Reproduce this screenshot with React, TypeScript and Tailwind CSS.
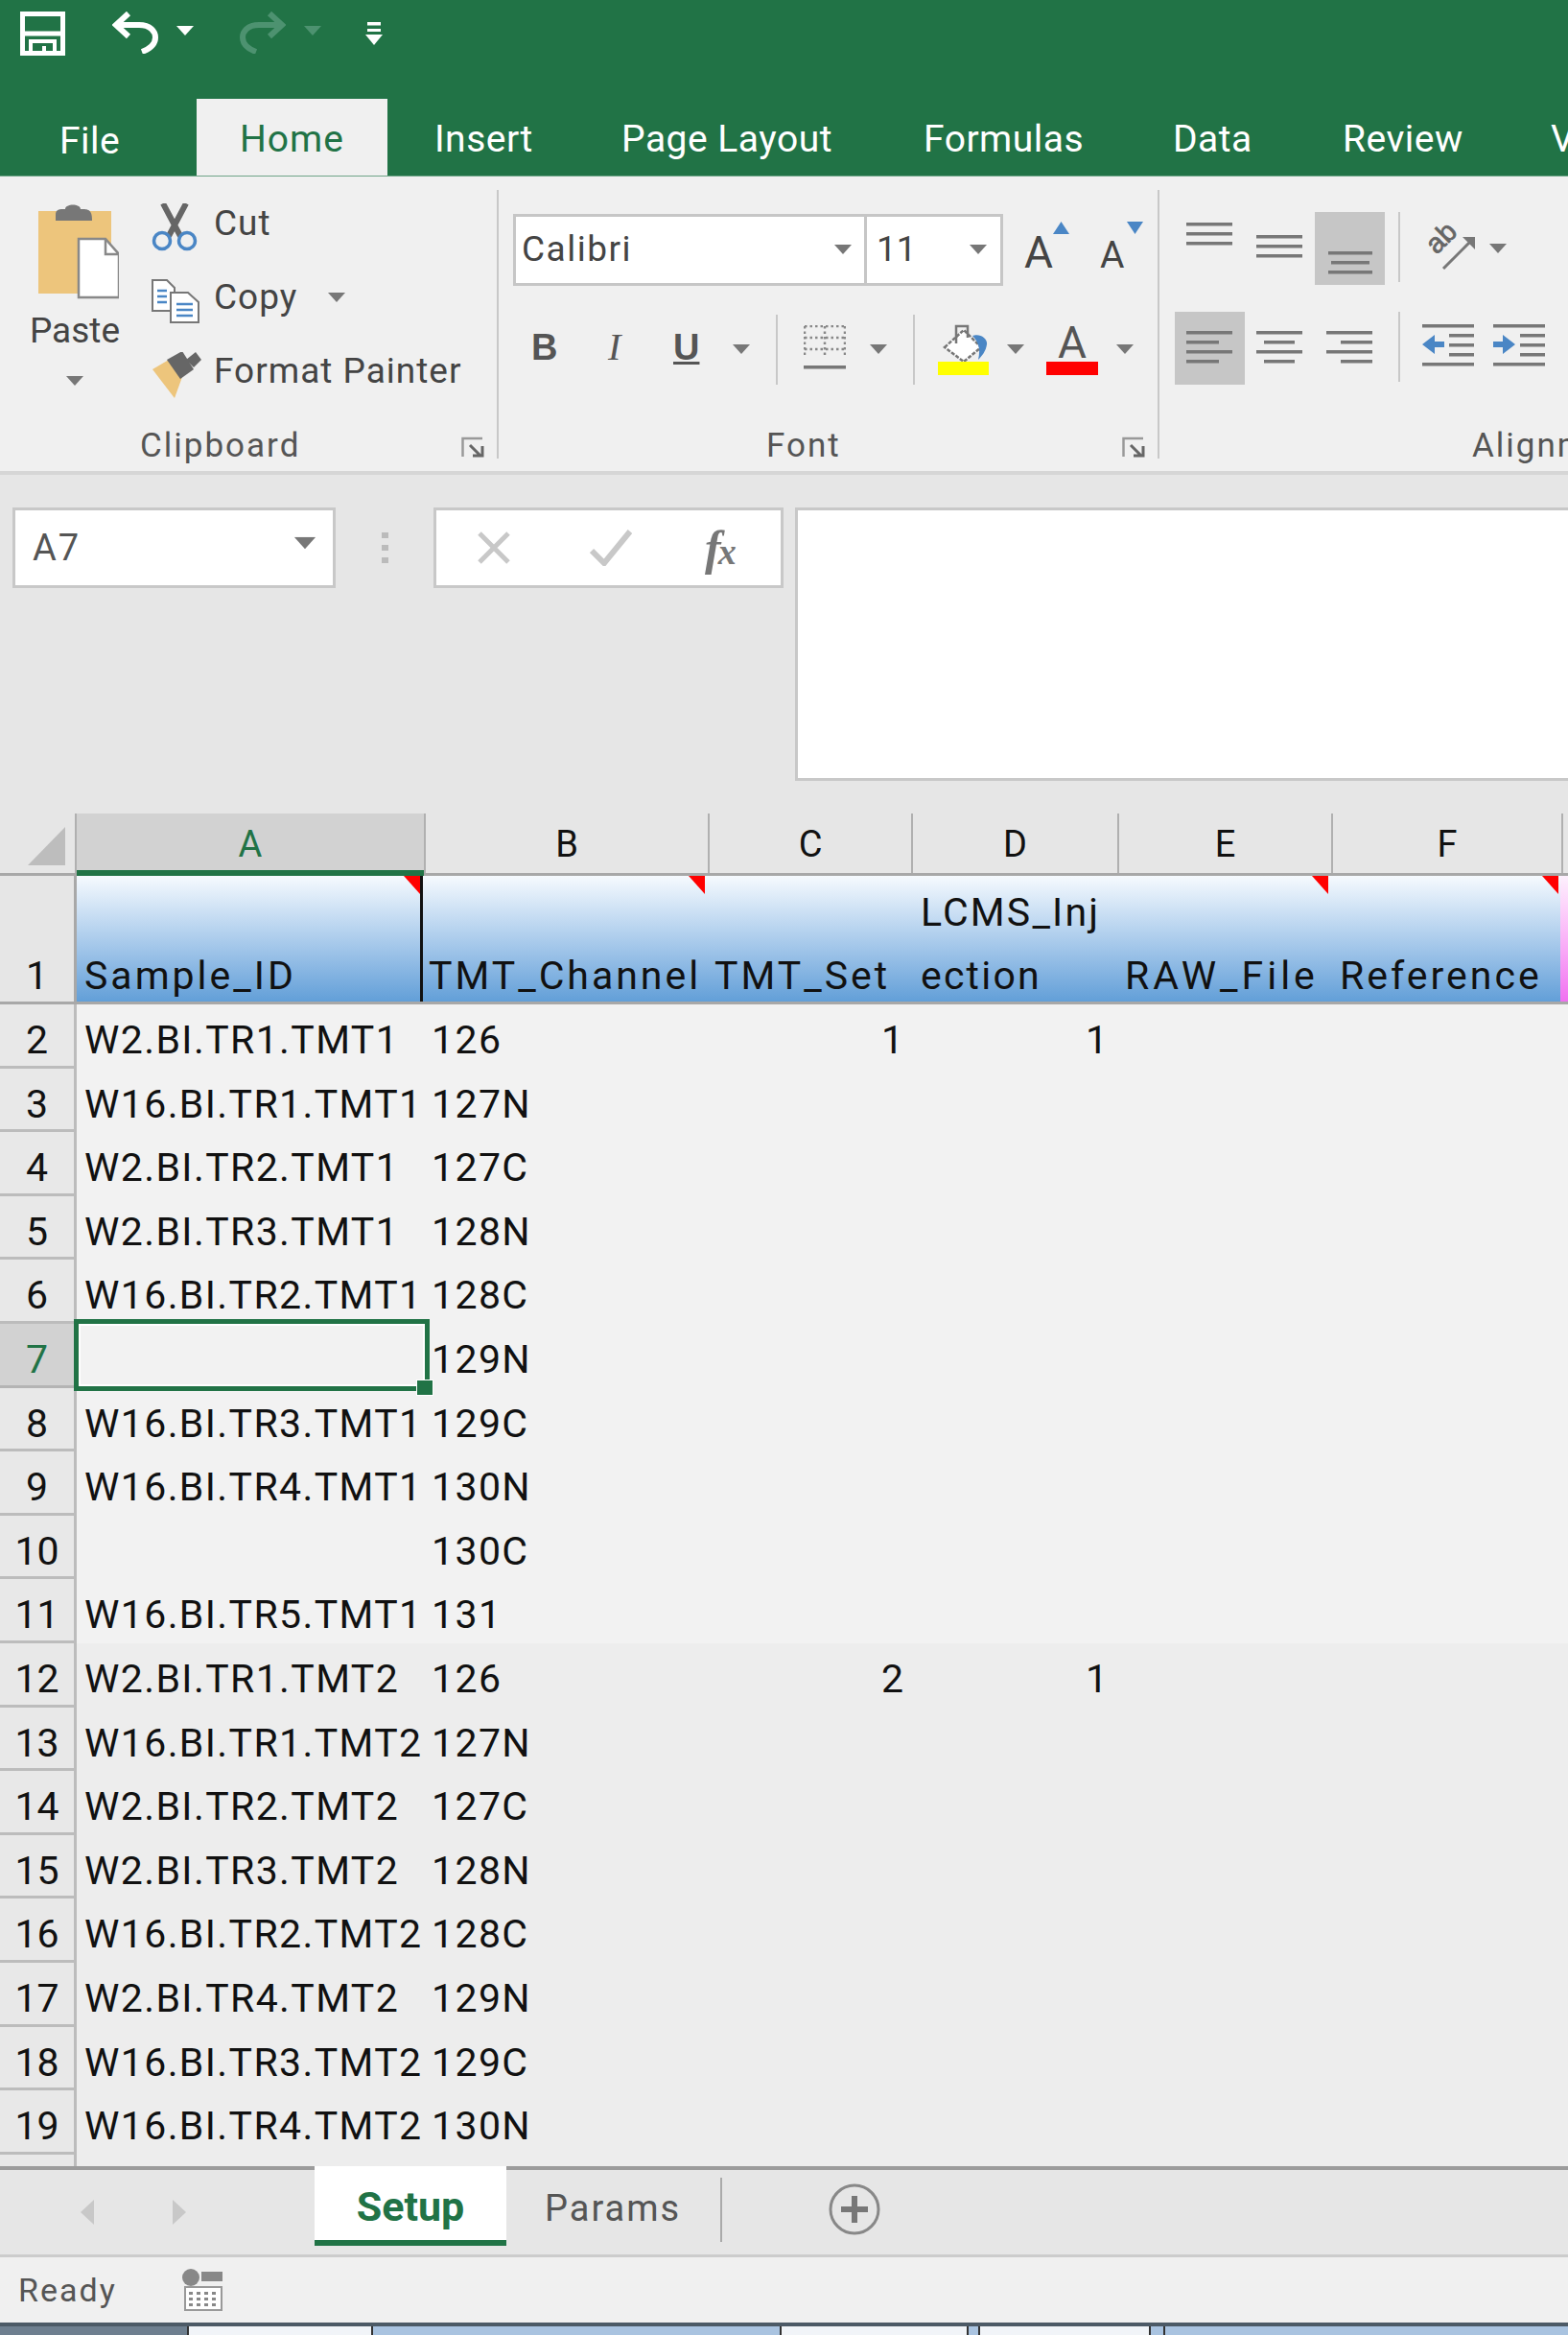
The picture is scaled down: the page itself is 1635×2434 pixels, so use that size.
import React from "react";

const ROWS: { a: string; b: string; c?: string; d?: string }[] = [
  { a: "W2.BI.TR1.TMT1", b: "126", c: "1", d: "1" },
  { a: "W16.BI.TR1.TMT1", b: "127N" },
  { a: "W2.BI.TR2.TMT1", b: "127C" },
  { a: "W2.BI.TR3.TMT1", b: "128N" },
  { a: "W16.BI.TR2.TMT1", b: "128C" },
  { a: "", b: "129N" },
  { a: "W16.BI.TR3.TMT1", b: "129C" },
  { a: "W16.BI.TR4.TMT1", b: "130N" },
  { a: "", b: "130C" },
  { a: "W16.BI.TR5.TMT1", b: "131" },
  { a: "W2.BI.TR1.TMT2", b: "126", c: "2", d: "1" },
  { a: "W16.BI.TR1.TMT2", b: "127N" },
  { a: "W2.BI.TR2.TMT2", b: "127C" },
  { a: "W2.BI.TR3.TMT2", b: "128N" },
  { a: "W16.BI.TR2.TMT2", b: "128C" },
  { a: "W2.BI.TR4.TMT2", b: "129N" },
  { a: "W16.BI.TR3.TMT2", b: "129C" },
  { a: "W16.BI.TR4.TMT2", b: "130N" },
];

function Caret({ className = "" }: { className?: string }) {
  return (
    <svg width="18" height="10" viewBox="0 0 18 10" className={"shrink-0 " + className}>
      <path d="M0 0H18L9 10Z" fill="#777" />
    </svg>
  );
}

function Launcher() {
  return (
    <svg width="25" height="23" viewBox="0 0 25 23">
      <path d="M1.5 21V2H22" fill="none" stroke="#999" strokeWidth="2.5" />
      <path d="M9 9L20 20M12 20H22V10" fill="none" stroke="#666" strokeWidth="3" />
    </svg>
  );
}

function Lines({ lines }: { lines: [number, number, number][] }) {
  return (
    <svg width="73" height="76" viewBox="0 0 73 76">
      {lines.map(([x1, x2, y], i) => (
        <rect key={i} x={x1} y={y} width={x2 - x1} height="3.5" fill="#777" />
      ))}
    </svg>
  );
}

function AlignBtn({ lines, active }: { lines: [number, number, number][]; active?: boolean }) {
  return (
    <div className={active ? "w-[73px] h-[76px] bg-[#c6c6c6]" : "w-[73px] h-[76px]"}>
      <Lines lines={lines} />
    </div>
  );
}

function Indent({ right }: { right?: boolean }) {
  return (
    <svg width="54" height="46" viewBox="0 0 54 46">
      <rect x="0" y="1" width="54" height="3.5" fill="#777" />
      <rect x="0" y="41" width="54" height="3.5" fill="#777" />
      <rect x="28" y="11" width="26" height="3.5" fill="#777" />
      <rect x="28" y="21" width="26" height="3.5" fill="#777" />
      <rect x="28" y="31" width="26" height="3.5" fill="#777" />
      {right ? (
        <path d="M0 19H10V12L23 22L10 32V25H0Z" fill="#4a86c5" />
      ) : (
        <path d="M23 19H13V12L0 22L13 32V25H23Z" fill="#4a86c5" />
      )}
    </svg>
  );
}

function Divider({ className }: { className: string }) {
  return <div className={"w-[2px] shrink-0 bg-[#c8c8c8] " + className} />;
}

function Title() {
  return (
    <div className="h-[184px] bg-[#217346] flex flex-col justify-between border-b-[1px] border-[#6fa488]">
      <div className="flex items-start pt-[12px] pl-[21px]">
        <svg width="47" height="46" viewBox="0 0 47 46">
          <path d="M2.5 2.5H44.5V43.5H2.5Z" fill="none" stroke="#fff" strokeWidth="5" />
          <path d="M2 23H45" stroke="#fff" strokeWidth="5" />
          <path d="M11 44V31H36V44M25 36V44" fill="none" stroke="#fff" strokeWidth="4" />
        </svg>
        <svg width="48" height="44" viewBox="0 0 48 44" className="ml-[49px]">
          <path d="M17 2L4 14L17 26M4 14H28C40 14 45 21 45 27C45 35 39 39 31 42" fill="none" stroke="#fff" strokeWidth="6" />
        </svg>
        <Caret className="ml-[19px] mt-[15px] [&>path]:fill-white" />
        <svg width="48" height="44" viewBox="0 0 48 44" className="ml-[48px]">
          <path d="M31 2L44 14L31 26M44 14H20C8 14 3 21 3 27C3 35 9 39 17 42" fill="none" stroke="#4d9270" strokeWidth="6" />
        </svg>
        <Caret className="ml-[19px] mt-[15px] [&>path]:fill-[#4d9270]" />
        <svg width="20" height="24" viewBox="0 0 20 24" className="ml-[45px] mt-[11px]">
          <rect x="3" y="0" width="14" height="3.5" fill="#fff" />
          <rect x="3" y="7" width="14" height="3" fill="#fff" />
          <path d="M1 13H19L10 24Z" fill="#fff" />
        </svg>
      </div>
      <div className="flex h-[80px] text-[39px] text-white font-['Roboto',sans-serif] whitespace-nowrap overflow-hidden tracking-[0.5px]">
        <div className="w-[205px] shrink-0 pl-[62px] pt-[15px]">File</div>
        <div className="w-[199px] shrink-0 bg-[#f0f0f0] text-[#217346] text-center pt-[13px] tracking-[1px]">Home</div>
        <div className="w-[244px] shrink-0 pl-[49px] pt-[13px]">Insert</div>
        <div className="w-[315px] shrink-0 pt-[13px]">Page Layout</div>
        <div className="w-[260px] shrink-0 pt-[13px]">Formulas</div>
        <div className="w-[177px] shrink-0 pt-[13px]">Data</div>
        <div className="w-[217px] shrink-0 pt-[13px]">Review</div>
        <div className="shrink-0 pt-[13px]">View</div>
      </div>
    </div>
  );
}

function Clipboard() {
  return (
    <div className="w-[520px] shrink-0 relative text-[#444]">
      <div className="flex pl-[30px] pt-[26px]">
        <div className="w-[96px] flex flex-col items-center text-[37px] leading-[44px]">
          <svg width="92" height="102" viewBox="0 0 92 102">
            <path d="M8 10H84V96H8Z" fill="#edc57c" />
            <path d="M26 14C26 8 30 8 36 8C36 2 52 2 52 8C60 8 64 8 64 20H26Z" fill="#777" />
            <path d="M50 39H78L92 55V100H50Z" fill="#fff" stroke="#888" strokeWidth="2.5" />
            <path d="M78 39V55H92" fill="none" stroke="#888" strokeWidth="2.5" />
          </svg>
          <div className="mt-[11px]">Paste</div>
          <Caret className="mt-[25px]" />
        </div>
        <div className="ml-[32px] -mt-[16px] flex flex-col text-[37px] tracking-[1px]">
          <div className="h-[77px] flex items-center">
            <svg width="48" height="50" viewBox="0 0 48 50" className="w-[65px] pr-[17px] mt-[8px]">
              <path d="M12 0L30 34M36 0L18 34" stroke="#666" strokeWidth="6" />
              <circle cx="11" cy="39" r="8.5" fill="none" stroke="#4a86c5" strokeWidth="3.5" />
              <circle cx="37" cy="39" r="8.5" fill="none" stroke="#4a86c5" strokeWidth="3.5" />
            </svg>
            <span>Cut</span>
          </div>
          <div className="h-[77px] flex items-center">
            <svg width="50" height="46" viewBox="0 0 50 46" className="w-[65px] pr-[15px] mt-[8px]">
              <path d="M1 1H16L24 9V33H1Z" fill="#fff" stroke="#777" strokeWidth="2" />
              <path d="M6 12H16M6 18H16M6 24H16" stroke="#4a86c5" strokeWidth="2.5" />
              <path d="M20 14H38L49 24V45H20Z" fill="#fff" stroke="#777" strokeWidth="2" />
              <path d="M26 26H43M26 32H43M26 38H43" stroke="#4a86c5" strokeWidth="2.5" />
            </svg>
            <span>Copy</span>
            <Caret className="ml-[32px]" />
          </div>
          <div className="h-[77px] flex items-center">
            <svg width="52" height="48" viewBox="0 0 52 48" className="w-[65px] pr-[13px] mt-[8px]">
              <path d="M1 18L18 8L32 26L24 48Z" fill="#edc57c" />
              <path d="M16 8L32 -1L44 18L30 28Z" fill="#666" />
              <path d="M36 8L46 0L52 8L44 16Z" fill="#666" />
            </svg>
            <span>Format Painter</span>
          </div>
        </div>
      </div>
      <div className="absolute left-[146px] top-[260px] text-[35px] leading-[42px] text-[#555] tracking-[2px]">Clipboard</div>
      <div className="absolute right-[14px] top-[271px]">
        <Launcher />
      </div>
      <Divider className="absolute right-0 top-[14px] h-[280px]" />
    </div>
  );
}

function Font() {
  return (
    <div className="w-[689px] shrink-0 relative text-[#444]">
      <div className="pl-[15px] pt-[38px] flex flex-col gap-[28px]">
        <div className="flex items-center h-[76px]">
          <div className="w-[369px] h-[75px] shrink-0 bg-white border-[3px] border-[#c6c6c6] flex items-center justify-between pl-[6px] pr-[13px] text-[37px] tracking-[1.5px]">
            <span>Calibri</span>
            <Caret />
          </div>
          <div className="w-[145px] h-[75px] shrink-0 -ml-[3px] bg-white border-[3px] border-[#c6c6c6] flex items-center justify-between pl-[10px] pr-[14px] text-[37px]">
            <span>11</span>
            <Caret />
          </div>
          <div className="w-[79px] shrink-0 ml-[22px] flex items-start -mt-[4px]">
            <span className="text-[46px] leading-[46px] mt-[10px]">A</span>
            <svg width="17" height="13" viewBox="0 0 17 13" className="mt-[1px]">
              <path d="M0 13L8.5 0L17 13Z" fill="#4a86c5" />
            </svg>
          </div>
          <div className="flex items-start -mt-[4px]">
            <span className="text-[39px] leading-[40px] mt-[16px]">A</span>
            <svg width="17" height="13" viewBox="0 0 17 13" className="mt-[1px] ml-[3px]">
              <path d="M0 0L8.5 13L17 0Z" fill="#4a86c5" />
            </svg>
          </div>
        </div>
        <div className="flex items-center h-[76px]">
          <span className="w-[73px] shrink-0 pl-[19px] -mt-[4px] font-['Liberation_Sans',sans-serif] font-bold text-[38px] text-[#555]">B</span>
          <span className="w-[90px] shrink-0 pl-[26px] -mt-[4px] font-['Liberation_Serif',serif] italic text-[40px] text-[#555]">I</span>
          <span className="w-[50px] shrink-0 pl-[4px] -mt-[4px] font-['Liberation_Sans',sans-serif] font-bold underline text-[38px] text-[#555]">U</span>
          <Caret className="ml-[16px]" />
          <Divider className="h-[73px] ml-[27px]" />
          <svg width="44" height="46" viewBox="0 0 44 46" className="ml-[27px] shrink-0 -mt-[4px]">
            <path d="M1 1H44M1 13H44M1 25H44M1 1V34M22 1V34M43 1V34" fill="none" stroke="#888" strokeWidth="2.5" strokeDasharray="2.5 3" />
            <rect x="0" y="42" width="44" height="3.5" fill="#777" />
          </svg>
          <Caret className="ml-[25px]" />
          <Divider className="h-[73px] ml-[27px]" />
          <div className="ml-[24px] w-[53px] shrink-0 flex flex-col">
            <svg width="53" height="39" viewBox="0 0 53 39">
              <path d="M7 24L27 6L45 24L27 39Z" fill="#fff" stroke="#777" strokeWidth="2.5" strokeDasharray="4 1.5" />
              <path d="M19 20V2H31V14" fill="none" stroke="#777" strokeWidth="2.5" />
              <path d="M36 12C44 9 52 15 51 21C50 28 46 33 42 37C44 28 44 20 36 12Z" fill="#4a86c5" />
            </svg>
            <div className="h-[14px] bg-[#ffff00]" />
          </div>
          <Caret className="ml-[19px]" />
          <div className="ml-[23px] w-[54px] shrink-0 flex flex-col items-center">
            <span className="h-[39px] text-[46px] leading-[38px] font-['Roboto',sans-serif] text-[#555]">A</span>
            <div className="h-[14px] w-[54px] bg-[#ff0000]" />
          </div>
          <Caret className="ml-[19px]" />
        </div>
      </div>
      <div className="absolute left-[279px] top-[260px] text-[35px] leading-[42px] text-[#555] tracking-[2px]">Font</div>
      <div className="absolute right-[14px] top-[271px]">
        <Launcher />
      </div>
      <Divider className="absolute right-0 top-[14px] h-[280px]" />
    </div>
  );
}

function Alignment() {
  return (
    <div className="flex-1 relative text-[#444]">
      <div className="pl-[16px] pt-[37px] flex flex-col gap-[28px]">
        <div className="flex h-[76px]">
          <AlignBtn lines={[[12, 60, 11], [12, 60, 21], [12, 60, 31]]} />
          <AlignBtn lines={[[12, 60, 24], [12, 60, 34], [12, 60, 44]]} />
          <AlignBtn active lines={[[14, 60, 41], [17, 57, 51], [14, 60, 61]]} />
          <Divider className="h-[73px] ml-[14px]" />
          <svg width="58" height="48" viewBox="0 0 58 48" className="ml-[23px] mt-[12px]">
            <text x="15" y="33" transform="rotate(-45 15 33)" fontFamily="Liberation Sans" fontSize="29" fill="#666" stroke="#666" strokeWidth="0.8">
              ab
            </text>
            <path d="M22 47L52 17" stroke="#777" strokeWidth="3" />
            <path d="M42 14H55V27Z" fill="#777" />
          </svg>
          <Caret className="ml-[12px] mt-[33px]" />
        </div>
        <div className="flex h-[76px]">
          <AlignBtn active lines={[[12, 60, 20], [12, 46, 30], [12, 60, 40], [12, 46, 50]]} />
          <AlignBtn lines={[[12, 60, 20], [20, 52, 30], [12, 60, 40], [20, 52, 50]]} />
          <AlignBtn lines={[[12, 60, 20], [27, 60, 30], [12, 60, 40], [27, 60, 50]]} />
          <Divider className="h-[73px] ml-[14px]" />
          <div className="flex gap-[20px] ml-[23px] mt-[12px] items-start">
            <Indent />
            <Indent right />
          </div>
        </div>
      </div>
      <div className="absolute left-[326px] top-[260px] text-[35px] leading-[42px] text-[#555] whitespace-nowrap tracking-[2px]">Alignment</div>
    </div>
  );
}

function Ribbon() {
  return (
    <div className="h-[311px] bg-[#f0f0f0] border-b-[4px] border-[#d6d6d6] flex font-['Roboto',sans-serif] overflow-hidden">
      <Clipboard />
      <Font />
      <Alignment />
    </div>
  );
}

function FormulaBar() {
  return (
    <div className="h-[353px] bg-[#e6e6e6] flex items-start pt-[34px] pl-[13px] font-['Roboto',sans-serif]">
      <div className="w-[337px] h-[84px] bg-white border-[3px] border-[#c8c8c8] flex items-center justify-between pl-[18px] pr-[20px] text-[#555] text-[38px] tracking-[2px]">
        <span>A7</span>
        <Caret className="[&>path]:fill-[#777] scale-125 -mt-[10px]" />
      </div>
      <div className="w-[102px] h-[84px] flex flex-col items-center justify-center gap-[7px]">
        <div className="w-[7px] h-[6px] bg-[#bbb]" />
        <div className="w-[7px] h-[6px] bg-[#bbb]" />
        <div className="w-[7px] h-[6px] bg-[#bbb]" />
      </div>
      <div className="w-[365px] h-[84px] bg-white border-[3px] border-[#c8c8c8] flex items-center pl-[42px]">
        <svg width="36" height="34" viewBox="0 0 36 34">
          <path d="M3 2L33 32M33 2L3 32" stroke="#c8c8c8" strokeWidth="5" />
        </svg>
        <svg width="44" height="38" viewBox="0 0 44 38" className="ml-[82px]">
          <path d="M2 22L15 35L42 2" fill="none" stroke="#c8c8c8" strokeWidth="6" />
        </svg>
        <span className="ml-[76px] font-['Liberation_Serif',serif] italic font-bold text-[#777] text-[50px] leading-none tracking-[-3px]">
          f<span className="text-[38px]">x</span>
        </span>
      </div>
      <div className="ml-[12px] flex-1 h-[285px] bg-white border-[3px] border-r-0 border-[#c8c8c8]" />
    </div>
  );
}

function CornerNote({ className }: { className: string }) {
  return (
    <svg width="17" height="19" viewBox="0 0 17 19" className={"absolute top-0 " + className}>
      <path d="M0 0H17V19Z" fill="#ff0000" />
    </svg>
  );
}

function ColumnHeader() {
  return (
    <div className="h-[65px] flex text-[38px] text-[#111] text-center border-b-[3px] border-[#a8a8a8] leading-[64px]">
      <div className="w-[80px] flex items-start pt-[14px] pl-[29px] border-r-[2px] border-[#b0b0b0]">
        <svg width="39" height="40" viewBox="0 0 39 40">
          <path d="M39 0V40H0Z" fill="#bdbdbd" />
        </svg>
      </div>
      <div className="w-[364px] relative bg-[#d2d2d2] text-[#217346] border-r-[2px] border-[#b0b0b0]">
        A
        <div className="absolute left-0 right-0 -bottom-[3px] h-[6px] bg-[#217346]" />
      </div>
      <div className="w-[296px] border-r-[2px] border-[#b0b0b0]">B</div>
      <div className="w-[212px] border-r-[2px] border-[#b0b0b0]">C</div>
      <div className="w-[215px] border-r-[2px] border-[#b0b0b0]">D</div>
      <div className="w-[223px] border-r-[2px] border-[#b0b0b0]">E</div>
      <div className="w-[240px] border-r-[2px] border-[#b0b0b0]">F</div>
    </div>
  );
}

function HeaderRow() {
  return (
    <div className="h-[134px] flex text-[41px] text-[#111] border-b-[3px] border-[#a8a8a8] whitespace-nowrap">
      <div className="w-[80px] bg-[#e6e6e6] border-r-[3px] border-[#a8a8a8] text-center flex items-end justify-center leading-[54px]">1</div>
      <div className="flex-1 flex items-end bg-linear-to-b from-[#f6fafe] to-[#629fd8] leading-[54px] tracking-[3px]">
        <div className="w-[361px] h-full relative flex items-end pl-[8px] border-r-[3px] border-[#111]">
          Sample_ID
          <CornerNote className="right-0" />
        </div>
        <div className="w-[296px] h-full relative flex items-end pl-[6px]">
          TMT_Channel
          <CornerNote className="right-[2px]" />
        </div>
        <div className="w-[212px] pl-[8px]">TMT_Set</div>
        <div className="w-[215px] pl-[11px] leading-[66px] -mb-[6px] tracking-[2.2px]">
          <div>LCMS_Inj</div>
          <div>ection</div>
        </div>
        <div className="w-[223px] h-full relative flex items-end pl-[9px] tracking-[4px]">
          RAW_File
          <CornerNote className="right-[2px]" />
        </div>
        <div className="w-[240px] h-full relative flex items-end pl-[10px]">
          Reference
          <CornerNote className="right-[2px]" />
        </div>
        <div className="flex-1 h-full bg-linear-to-b from-[#fdf0fd] to-[#f070f0]" />
      </div>
    </div>
  );
}

function SheetRow({ n, row }: { n: number; row: (typeof ROWS)[number] }) {
  const active = n === 7;
  const rowBg = n >= 12 ? "bg-[#ededed]" : "bg-[#f2f2f2]";
  return (
    <div className={"h-[66.6px] flex text-[41px] leading-[74px] text-[#111] whitespace-nowrap " + rowBg}>
      <div
        className={
          active
            ? "w-[80px] shrink-0 text-center bg-[#d2d2d2] text-[#217346] border-r-[3px] border-b-[3px] border-[#b4b4b4]"
            : "w-[80px] shrink-0 text-center bg-[#e8e8e8] border-r-[3px] border-b-[3px] border-[#bcbcbc]"
        }
      >
        {n}
      </div>
      <div className="w-[361px] pl-[8px] tracking-[1.4px]">{row.a}</div>
      <div className="w-[299px] pl-[9px] tracking-[1.4px]">{row.b}</div>
      <div className="w-[212px] pr-[10px] text-right">{row.c}</div>
      <div className="w-[215px] pr-[12px] text-right">{row.d}</div>
    </div>
  );
}

function Sheet() {
  return (
    <div className="h-[1410px] font-['Roboto',sans-serif] overflow-hidden">
      <div className="bg-[#e6e6e6]">
        <ColumnHeader />
      </div>
      <HeaderRow />
      <div className="relative bg-[#ededed] h-full">
        {ROWS.map((row, i) => (
          <SheetRow key={i} n={i + 2} row={row} />
        ))}
        <div className="w-[80px] h-[12px] bg-[#e8e8e8] border-r-[3px] border-[#bcbcbc]" />
        <div className="absolute left-[77px] top-[328px] w-[371px] h-[75px] border-[5px] border-[#217346] outline-[2px] outline-white -outline-offset-[7px]" />
        <div className="absolute left-[434px] top-[391px] w-[18px] h-[17px] bg-[#217346] border-[1px] border-white" />
      </div>
    </div>
  );
}

function SheetTabs() {
  return (
    <div className="h-[95px] bg-[#e6e6e6] border-t-[4px] border-b-[3px] border-t-[#9c9c9c] border-b-[#cccccc] flex font-['Roboto',sans-serif] text-[38px]">
      <div className="w-[328px] pl-[84px] flex items-center gap-[82px]">
        <svg width="14" height="26" viewBox="0 0 14 26">
          <path d="M14 0V26L0 13Z" fill="#c8c8c8" />
        </svg>
        <svg width="14" height="26" viewBox="0 0 14 26">
          <path d="M0 0V26L14 13Z" fill="#c8c8c8" />
        </svg>
      </div>
      <div className="w-[200px] h-[83px] -mt-[4px] bg-white border-b-[6px] border-[#217346] text-[#217346] font-bold text-[43px] text-center leading-[84px]">
        Setup
      </div>
      <div className="w-[225px] h-[67px] mt-[8px] border-r-[2px] border-[#aaaaaa] pl-[40px] text-[#555] leading-[64px] tracking-[2px]">Params</div>
      <svg width="54" height="54" viewBox="0 0 54 54" className="ml-[111px] mt-[14px]">
        <circle cx="27" cy="27" r="25" fill="none" stroke="#888" strokeWidth="3" />
        <path d="M27 13V41M13 27H41" stroke="#777" strokeWidth="6" />
      </svg>
    </div>
  );
}

function StatusBar() {
  return (
    <div className="h-[68px] bg-[#f0f0f0] flex items-center pl-[19px] font-['Roboto',sans-serif] text-[#555] text-[34px]">
      <span className="w-[171px] tracking-[2px]">Ready</span>
      <svg width="42" height="44" viewBox="0 0 42 44">
        <circle cx="9" cy="9" r="9" fill="#888" />
        <rect x="20" y="3" width="22" height="10" fill="#888" />
        <rect x="3" y="19" width="38" height="24" fill="#fff" stroke="#999" strokeWidth="2" />
        <path d="M9 24V40M17 24V40M25 24V40M33 24V40" stroke="#888" strokeWidth="4" strokeDasharray="3 3" />
      </svg>
    </div>
  );
}

function Taskbar() {
  return (
    <div className="flex-1 bg-[#a9c3e0] border-t-[4px] border-[#4c5a66] flex">
      <div className="w-[195px] bg-[#6e7f8f]" />
      <div className="w-[194px] bg-[#f1f4f8] border-x-[2px] border-[#333]" />
      <div className="w-[424px]" />
      <div className="w-[197px] bg-[#f1f4f8] border-x-[2px] border-[#333]" />
      <div className="w-[10px]" />
      <div className="w-[180px] bg-[#f1f4f8] border-x-[2px] border-[#333]" />
      <div className="w-[15px] border-r-[2px] border-[#333]" />
    </div>
  );
}

export default function App() {
  return (
    <div className="w-[1635px] h-[2434px] flex flex-col overflow-hidden bg-[#f2f2f2]">
      <Title />
      <Ribbon />
      <FormulaBar />
      <Sheet />
      <SheetTabs />
      <StatusBar />
      <Taskbar />
    </div>
  );
}
